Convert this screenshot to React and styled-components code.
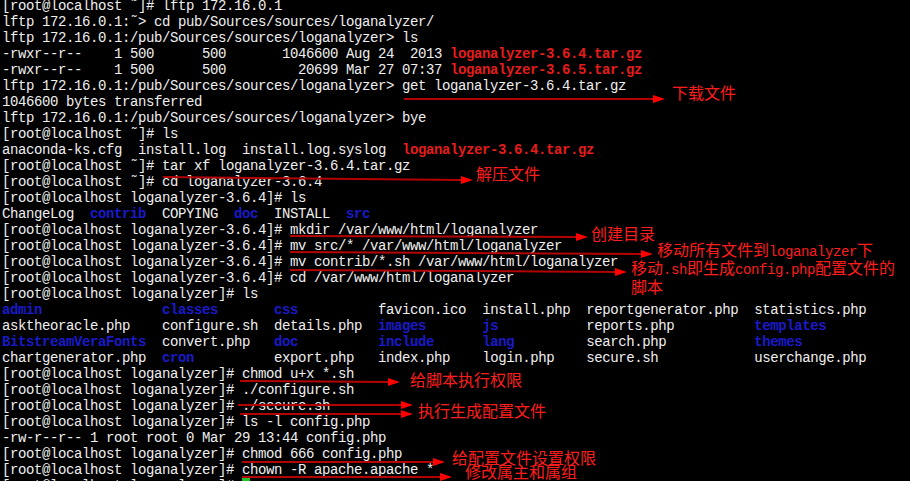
import React from 'react';
import styled, { createGlobalStyle } from 'styled-components';

const GlobalStyle = createGlobalStyle`
  html, body {
    margin: 0;
    padding: 0;
    background: #000;
  }
`;

const Screen = styled.div`
  position: relative;
  width: 910px;
  height: 481px;
  overflow: hidden;
  background: #000;
`;

const Output = styled.div`
  display: flex;
  flex-direction: column;
  margin-top: -2px;
  padding-left: 2px;
  font-family: "Liberation Mono", "DejaVu Sans Mono", monospace;
  font-size: 14px;
  letter-spacing: -0.4px;
  line-height: 16px;
  color: #efefef;
`;

const Line = styled.div`
  display: flex;
  height: 16px;
  white-space: pre;
`;

const Seg = styled.span`
  font-weight: ${p => (p.$tone ? 700 : 400)};
  color: ${p => (p.$tone === 'red' ? '#e41c1c' : p.$tone === 'blue' ? '#1a1ac8' : 'inherit')};
`;

const Cursor = styled.span`
  display: inline-block;
  width: 8px;
  height: 16px;
  background: #22c02a;
`;

const Marks = styled.svg`
  position: absolute;
  left: 0;
  top: 0;
  pointer-events: none;
`;

const Note = styled.div`
  position: absolute;
  left: ${p => p.$x}px;
  top: ${p => p.$y}px;
  font-family: "Noto Sans CJK SC", "Noto Sans", sans-serif;
  font-size: 16px;
  line-height: 16px;
  color: #ff1c1c;
  white-space: pre;
`;

const Latin = styled.span`
  font-family: "Liberation Mono", monospace;
  font-size: 14px;
  letter-spacing: -0.4px;
`;

const ROOT = '[root@localhost \u02dc]# ';
const LA = '[root@localhost loganalyzer-3.6.4]# ';
const LZ = '[root@localhost loganalyzer]# ';
const FTP = 'lftp 172.16.0.1:/pub/Sources/sources/loganalyzer> ';

// widths of the ls columns, in characters
const cols = [20, 14, 13, 13, 13, 21];
const lsRows = [
  [['admin', 'blue'], ['classes', 'blue'], ['css', 'blue'], ['favicon.ico'], ['install.php'], ['reportgenerator.php'], ['statistics.php']],
  [['asktheoracle.php'], ['configure.sh'], ['details.php'], ['images', 'blue'], ['js', 'blue'], ['reports.php'], ['templates', 'blue']],
  [['BitstreamVeraFonts', 'blue'], ['convert.php'], ['doc', 'blue'], ['include', 'blue'], ['lang', 'blue'], ['search.php'], ['themes', 'blue']],
  [['chartgenerator.php'], ['cron', 'blue'], ['export.php'], ['index.php'], ['login.php'], ['secure.sh'], ['userchange.php']],
];
const gridLine = row => row.map(([name, tone], i) => [i < cols.length ? name.padEnd(cols[i]) : name, tone]);

const lines = [
  [[ROOT + 'lftp 172.16.0.1']],
  [['lftp 172.16.0.1:\u02dc> cd pub/Sources/sources/loganalyzer/']],
  [[FTP + 'ls']],
  [['-rwxr--r--    1 500      500       1046600 Aug 24  2013 '], ['loganalyzer-3.6.4.tar.gz', 'red']],
  [['-rwxr--r--    1 500      500         20699 Mar 27 07:37 '], ['loganalyzer-3.6.5.tar.gz', 'red']],
  [[FTP + 'get loganalyzer-3.6.4.tar.gz']],
  [['1046600 bytes transferred']],
  [[FTP + 'bye']],
  [[ROOT + 'ls']],
  [['anaconda-ks.cfg  install.log  install.log.syslog  '], ['loganalyzer-3.6.4.tar.gz', 'red']],
  [[ROOT + 'tar xf loganalyzer-3.6.4.tar.gz']],
  [[ROOT + 'cd loganalyzer-3.6.4']],
  [[LA + 'ls']],
  [['ChangeLog  '], ['contrib', 'blue'], ['  COPYING  '], ['doc', 'blue'], ['  INSTALL  '], ['src', 'blue']],
  [[LA + 'mkdir /var/www/html/loganalyzer']],
  [[LA + 'mv src/* /var/www/html/loganalyzer']],
  [[LA + 'mv contrib/*.sh /var/www/html/loganalyzer']],
  [[LA + 'cd /var/www/html/loganalyzer']],
  [[LZ + 'ls']],
  ...lsRows.map(gridLine),
  [[LZ + 'chmod u+x *.sh']],
  [[LZ + './configure.sh']],
  [[LZ + './secure.sh']],
  [[LZ + 'ls -l config.php']],
  [['-rw-r--r-- 1 root root 0 Mar 29 13:44 config.php']],
  [[LZ + 'chmod 666 config.php']],
  [[LZ + 'chown -R apache.apache *']],
];

// hand-drawn annotation arrows: [x1, y1, tipX, tipY]
const arrows = [
  [404, 99, 665, 99],
  [163, 177, 473, 180],
  [290, 236, 588, 237],
  [290, 252, 653, 254],
  [290, 270, 627, 272],
  [240, 381, 400, 382],
  [238, 405, 413, 405],
  [240, 414, 413, 414],
  [242, 462, 445, 462],
  [242, 477, 452, 477],
];

const Arrow = ({ x1, y1, x2, y2 }) => {
  const head = 12;
  const a = Math.atan2(y2 - y1, x2 - x1);
  const bx = x2 - head * Math.cos(a);
  const by = y2 - head * Math.sin(a);
  const nx = -Math.sin(a) * 4;
  const ny = Math.cos(a) * 4;
  return (
    <g>
      <line x1={x1} y1={y1} x2={bx} y2={by} stroke="#b40000" strokeWidth="2" />
      <polygon points={`${x2},${y2} ${bx + nx},${by + ny} ${bx - nx},${by - ny}`} fill="#f00" />
    </g>
  );
};

export default function App() {
  return (
    <Screen>
      <GlobalStyle />
      <Output>
        {lines.map((segs, i) => (
          <Line key={i}>
            {segs.map(([text, tone], j) => (
              <Seg key={j} $tone={tone}>{text}</Seg>
            ))}
          </Line>
        ))}
        <Line>
          <Seg>{LZ}</Seg>
          <Cursor />
        </Line>
      </Output>

      <Marks width="910" height="481">
        {arrows.map(([x1, y1, x2, y2], i) => (
          <Arrow key={i} x1={x1} y1={y1} x2={x2} y2={y2} />
        ))}
      </Marks>

      <Note $x={672} $y={84}>下载文件</Note>
      <Note $x={476} $y={165}>解压文件</Note>
      <Note $x={591} $y={225}>创建目录</Note>
      <Note $x={657} $y={241}>移动所有文件到<Latin>loganalyzer</Latin>下</Note>
      <Note $x={631} $y={259}>
        移动<Latin>.sh</Latin>即生成<Latin>config.php</Latin>配置文件的{'\n'}脚本
      </Note>
      <Note $x={410} $y={371}>给脚本执行权限</Note>
      <Note $x={418} $y={402}>执行生成配置文件</Note>
      <Note $x={452} $y={449}>给配置文件设置权限</Note>
      <Note $x={465} $y={463}>修改属主和属组</Note>
    </Screen>
  );
}
